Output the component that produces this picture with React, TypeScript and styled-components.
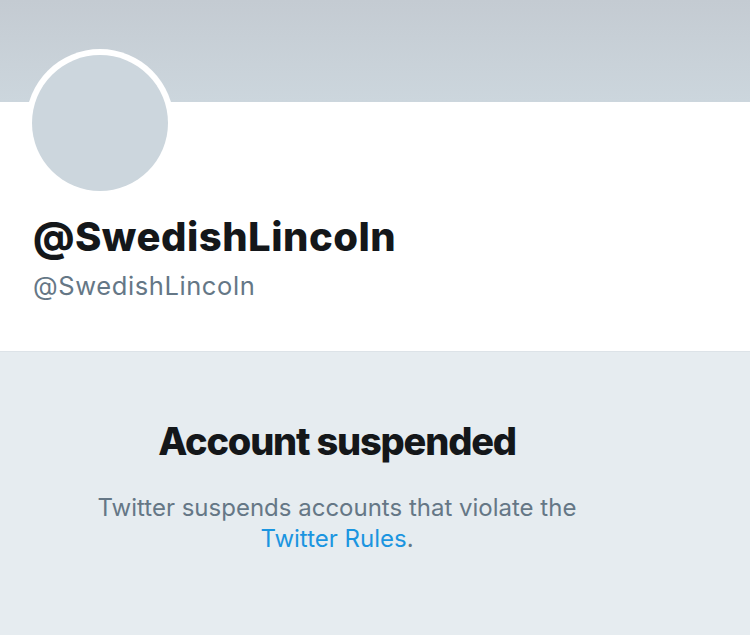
import React from 'react'
import styled, { createGlobalStyle } from 'styled-components'

const Global = createGlobalStyle`
  html, body {
    margin: 0;
    padding: 0;
    background: #e6ecf0;
    font-family: Inter, "Noto Sans", "Liberation Sans", sans-serif;
  }
`

const App = () => {
  return (
    <Page>
      <Global />
      <Banner />
      <Profile>
        <Avatar>
          <AvatarInner />
        </Avatar>
        <Name>@SwedishLincoln</Name>
        <Handle>@SwedishLincoln</Handle>
      </Profile>
      <Notice>
        <Message>
          <Title>Account suspended</Title>
          <Body>
            Twitter suspends accounts that violate the <Link>Twitter Rules</Link>.
          </Body>
        </Message>
      </Notice>
    </Page>
  )
}

export default App

const Page = styled.div`
  width: 750px;
  height: 635px;
  overflow: hidden;
  display: flex;
  flex-direction: column;
  background: #e6ecf0;
`

const Banner = styled.div`
  height: 102px;
  flex-shrink: 0;
  background: linear-gradient(#c4cbd2, #ccd6dd);
`

const Profile = styled.div`
  position: relative;
  background: #fff;
  height: 249px;
  flex-shrink: 0;
  padding: 0 33px;
  border-bottom: 1px solid #dde3e8;
`

const Avatar = styled.div`
  width: 148px;
  height: 148px;
  border-radius: 50%;
  background: #fff;
  margin: -53px 0 0 -7px;
  display: flex;
  align-items: center;
  justify-content: center;
`

const AvatarInner = styled.div`
  width: 136px;
  height: 136px;
  border-radius: 50%;
  background: #ccd6dd;
`

const Name = styled.div`
  margin-top: 16px;
  font-size: 40px;
  font-weight: 800;
  line-height: 48px;
  color: #14171a;
  letter-spacing: 0.5px;
`

const Handle = styled.div`
  margin-top: 10px;
  font-size: 25.5px;
  line-height: 30px;
  color: #657786;
  letter-spacing: 0.6px;
`

const Notice = styled.div`
  flex: 1;
  background: #e6ecf0;
`

const Message = styled.div`
  width: 600px;
  margin: 0 0 0 37px;
  padding-top: 66px;
  display: flex;
  flex-direction: column;
  align-items: center;
  text-align: center;
`

const Title = styled.div`
  font-size: 38px;
  font-weight: 800;
  line-height: 46px;
  color: #14171a;
  letter-spacing: -1.2px;
`

const Body = styled.div`
  margin-top: 28px;
  max-width: 500px;
  font-size: 24px;
  line-height: 31px;
  color: #657786;
`

const Link = styled.span`
  color: #1b95e0;
`
